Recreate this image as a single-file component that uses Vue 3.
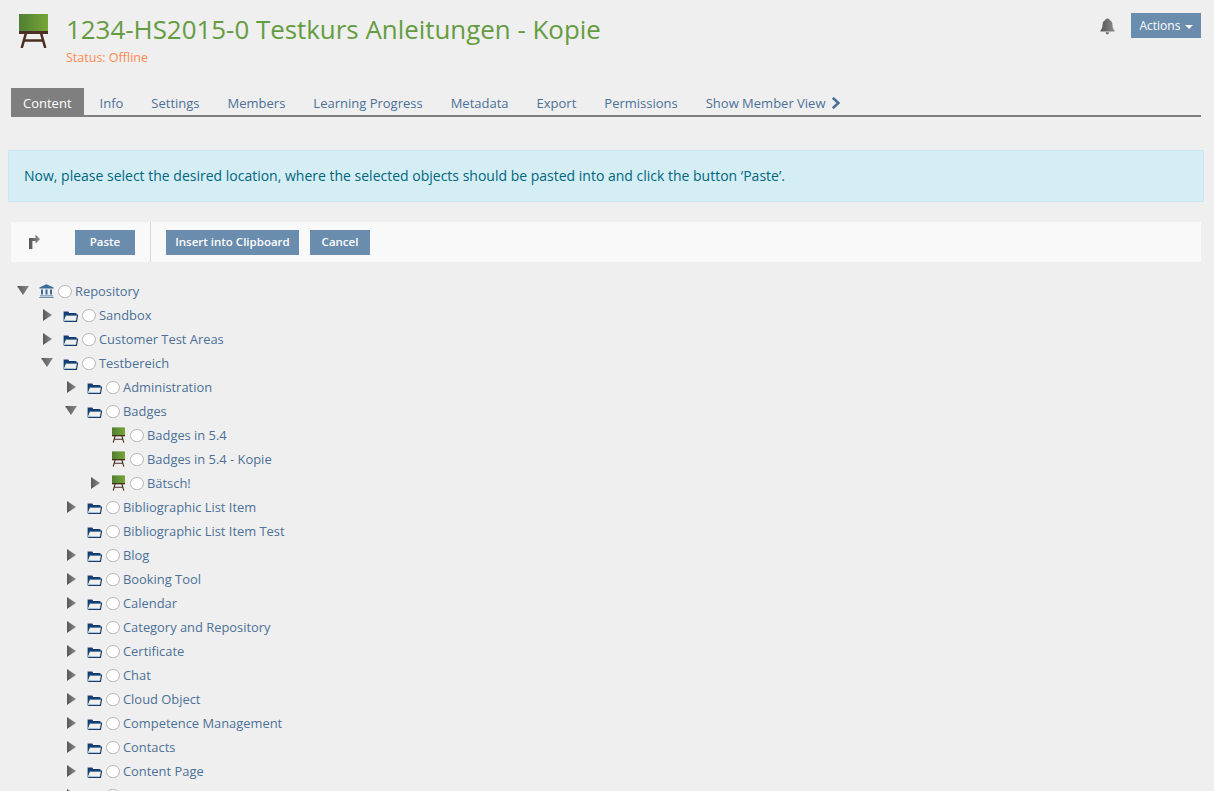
<script setup>
const tabs = ['Info', 'Settings', 'Members', 'Learning Progress', 'Metadata', 'Export', 'Permissions']
const rows = [
  { label: 'Repository', level: 0, arrow: 'down', icon: 'repo' },
  { label: 'Sandbox', level: 1, arrow: 'right', icon: 'folder' },
  { label: 'Customer Test Areas', level: 1, arrow: 'right', icon: 'folder' },
  { label: 'Testbereich', level: 1, arrow: 'down', icon: 'folder' },
  { label: 'Administration', level: 2, arrow: 'right', icon: 'folder' },
  { label: 'Badges', level: 2, arrow: 'down', icon: 'folder' },
  { label: 'Badges in 5.4', level: 3, arrow: '', icon: 'course' },
  { label: 'Badges in 5.4 - Kopie', level: 3, arrow: '', icon: 'course' },
  { label: 'Bätsch!', level: 3, arrow: 'right', icon: 'course' },
  { label: 'Bibliographic List Item', level: 2, arrow: 'right', icon: 'folder' },
  { label: 'Bibliographic List Item Test', level: 2, arrow: '', icon: 'folder' },
  { label: 'Blog', level: 2, arrow: 'right', icon: 'folder' },
  { label: 'Booking Tool', level: 2, arrow: 'right', icon: 'folder' },
  { label: 'Calendar', level: 2, arrow: 'right', icon: 'folder' },
  { label: 'Category and Repository', level: 2, arrow: 'right', icon: 'folder' },
  { label: 'Certificate', level: 2, arrow: 'right', icon: 'folder' },
  { label: 'Chat', level: 2, arrow: 'right', icon: 'folder' },
  { label: 'Cloud Object', level: 2, arrow: 'right', icon: 'folder' },
  { label: 'Competence Management', level: 2, arrow: 'right', icon: 'folder' },
  { label: 'Contacts', level: 2, arrow: 'right', icon: 'folder' },
  { label: 'Content Page', level: 2, arrow: 'right', icon: 'folder' },
  { label: 'Course Management', level: 2, arrow: 'right', icon: 'folder' },
]
</script>

<template>
  <div class="page">
    <svg class="defs" width="0" height="0" aria-hidden="true">
      <defs>
        <linearGradient id="board" x1="0" y1="0" x2="1" y2="0">
          <stop offset="0" stop-color="#4f7f33" />
          <stop offset="1" stop-color="#76a637" />
        </linearGradient>
        <linearGradient id="greyIcon" x1="0" y1="0" x2="1" y2="0">
          <stop offset="0" stop-color="#555" />
          <stop offset="1" stop-color="#8c8c8c" />
        </linearGradient>
        <symbol id="course" viewBox="0 0 29 34">
          <rect x="0" y="0" width="29" height="17" fill="url(#board)" />
          <rect x="0" y="17" width="29" height="3" fill="#4a2f22" />
          <path d="M7 19 L3 33 M22 19 L26 33 M5 26.5 H24" stroke="#4a2f22" stroke-width="2.6" fill="none" stroke-linecap="round" />
        </symbol>
        <symbol id="folder" viewBox="0 0 15 11">
          <path d="M3.4 4 H14.6 L13.4 10.4 H1.2" fill="none" stroke="#123f72" stroke-width="1.2" />
          <path d="M0.6 0.6 H5.2 L6.2 2 H13.4 V4.2 H3 L1 9.5 V10.4 H0.6 Z" fill="#123f72" />
        </symbol>
        <symbol id="repo" viewBox="0 0 15 14">
          <path d="M7.5 0.3 L14.6 3.6 V4.6 H0.4 V3.6 Z" fill="#3a6a98" />
          <path d="M2 5.6 H4 V10.6 H2 Z M6.5 5.6 H8.5 V10.6 H6.5 Z M11 5.6 H13 V10.6 H11 Z" fill="#3a6a98" />
          <path d="M1 11.4 H14 V12.3 H1 Z M0.3 12.9 H14.7 V13.8 H0.3 Z" fill="#3a6a98" />
        </symbol>
      </defs>
    </svg>

    <header class="head">
      <svg class="head-icon"><use href="#course" /></svg>
      <div class="head-text">
        <h1 class="title">1234-HS2015-0 Testkurs Anleitungen - Kopie</h1>
        <div class="status">Status: Offline</div>
      </div>
      <div class="head-actions">
        <svg class="bell" viewBox="0 0 15 17">
          <path d="M7.5 0.5 C9 0.5 9.6 1.4 9.8 2.2 C12 3 12.4 5.2 12.5 7.5 C12.6 10 13.6 11.4 14.6 12.6 V13.4 H0.4 V12.6 C1.4 11.4 2.4 10 2.5 7.5 C2.6 5.2 3 3 5.2 2.2 C5.4 1.4 6 0.5 7.5 0.5 Z" fill="url(#greyIcon)" />
          <path d="M5.6 14.2 H9.4 C9.2 15.6 8.4 16.4 7.5 16.4 C6.6 16.4 5.8 15.6 5.6 14.2 Z" fill="url(#greyIcon)" />
        </svg>
        <button class="btn actions">Actions <span class="caret"></span></button>
      </div>
    </header>

    <nav class="tabs">
      <a class="tab active">Content</a>
      <a v-for="t in tabs" :key="t" class="tab">{{ t }}</a>
      <a class="tab">Show Member View
        <svg class="chev" viewBox="0 0 9 12"><path d="M1.8 0.8 L7.4 6 L1.8 11.2" fill="none" stroke="#4a7098" stroke-width="2.6" /></svg>
      </a>
    </nav>

    <div class="message">Now, please select the desired location, where the selected objects should be pasted into and click the button ‘Paste’.</div>

    <div class="toolbar">
      <svg class="turn" viewBox="0 0 12 15">
        <path d="M1 15 V4 H7.5 V0.6 L12 5.2 L7.5 9.6 V7 H4.4 V15 Z" fill="url(#greyIcon)" />
      </svg>
      <button class="btn paste">Paste</button>
      <span class="sep"></span>
      <button class="btn insert">Insert into Clipboard</button>
      <button class="btn cancel">Cancel</button>
    </div>

    <ul class="tree">
      <li v-for="r in rows" :key="r.label" class="row" :style="{ paddingLeft: r.level * 24 + 'px' }">
        <span class="arrow-slot">
          <span v-if="r.arrow" :class="['arrow', r.arrow]"></span>
        </span>
        <svg v-if="r.icon === 'course'" class="ico course"><use href="#course" /></svg>
        <svg v-else-if="r.icon === 'repo'" class="ico"><use href="#repo" /></svg>
        <svg v-else class="ico folder"><use href="#folder" /></svg>
        <span class="radio"></span>
        <a class="label">{{ r.label }}</a>
      </li>
    </ul>
  </div>
</template>

<style>
html, body { margin: 0; background: #efefef; overflow: hidden; }
</style>

<style scoped>
.page {
  height: 791px;
  overflow: hidden;
  background: #efefef;
  font-family: "Open Sans", sans-serif;
  font-size: 13px;
  color: #4c6586;
  position: relative;
}
.defs { position: absolute; }
.head {
  display: flex;
  height: 88px;
  padding: 13px 13px 0 19px;
  box-sizing: border-box;
}
.head-icon { width: 29px; height: 34px; flex: none; margin-top: 1px; }
.head-text { margin-left: 18px; flex: 1; }
.title {
  margin: 0;
  font-size: 25.9px;
  line-height: 32px;
  font-weight: 400;
  color: #659c41;
}
.status { margin-top: 4px; font-size: 12.5px; line-height: 18px; color: #fd8a4f; }
.head-actions { display: flex; align-items: flex-start; }
.bell { width: 15px; height: 17px; margin: 5px 16px 0 0; }
.btn {
  border: 0;
  background: #6a8cad;
  color: #fff;
  font-family: inherit;
  font-size: 11.5px;
  font-weight: 600;
  padding: 0 0 2px;
  height: 25px;
  line-height: 23px;
  text-align: center;
}
.actions { width: 70px; font-weight: 400; font-size: 12px; padding: 0; line-height: 25px; }
.caret {
  display: inline-block;
  width: 0;
  height: 0;
  margin-left: 1px;
  vertical-align: middle;
  border-left: 4px solid transparent;
  border-right: 4px solid transparent;
  border-top: 4px solid #fff;
}
.tabs {
  display: flex;
  align-items: flex-end;
  height: 29px;
  margin: 0 13px 0 11px;
  border-bottom: 2px solid #7f7f7f;
  box-sizing: border-box;
}
.tab {
  height: 27px;
  padding: 2px 12px 0;
  box-sizing: border-box;
  margin-right: 4px;
  color: #4c7097;
  white-space: nowrap;
  display: flex;
  align-items: center;
  gap: 6px;
}
.tab.active { background: #7f7f7f; color: #fff; }
.chev { width: 9px; height: 12px; }
.message {
  margin: 33px 10px 0 8px;
  height: 52px;
  box-sizing: border-box;
  padding: 0 15px;
  line-height: 50px;
  background: #d5eef6;
  border: 1px solid #c9e7ef;
  color: #00667c;
  font-size: 14px;
}
.toolbar {
  display: flex;
  align-items: center;
  margin: 20px 13px 0 11px;
  height: 40px;
  background: #f9f9f9;
}
.turn { width: 12px; height: 15px; margin-left: 17px; margin-top: -2px; flex: none; }
.paste { width: 60px; margin-left: 35px; }
.sep { width: 1px; height: 40px; background: #d8d8d8; margin: 0 15px; }
.insert { width: 133px; }
.cancel { width: 60px; margin-left: 11px; }
.tree {
  list-style: none;
  margin: 17px 0 0;
  padding: 0 0 0 17px;
  font-size: 12.9px;
}
.row {
  display: flex;
  align-items: center;
  height: 24px;
  white-space: nowrap;
}
.arrow-slot { width: 22px; height: 24px; flex: none; position: relative; }
.arrow { position: absolute; background: linear-gradient(90deg, #585858, #8a8a8a); }
.arrow.down {
  left: 0;
  top: 7px;
  width: 12px;
  height: 9px;
  clip-path: polygon(0 0, 100% 0, 50% 100%);
}
.arrow.right {
  left: 2px;
  top: 6px;
  width: 9px;
  height: 12px;
  clip-path: polygon(0 0, 100% 50%, 0 100%);
}
.ico { width: 15px; height: 14px; flex: none; }
.ico.folder { height: 11px; margin-top: 2px; }
.ico.course { width: 13px; height: 16px; margin: 0 1px; }
.radio {
  width: 11.5px;
  height: 11.5px;
  flex: none;
  margin: 1px 0 0 4px;
  border: 1.25px solid #b5b5b5;
  border-radius: 50%;
  background: #fff;
}
.label { margin-left: 3.5px; color: #4c7097; }
</style>
